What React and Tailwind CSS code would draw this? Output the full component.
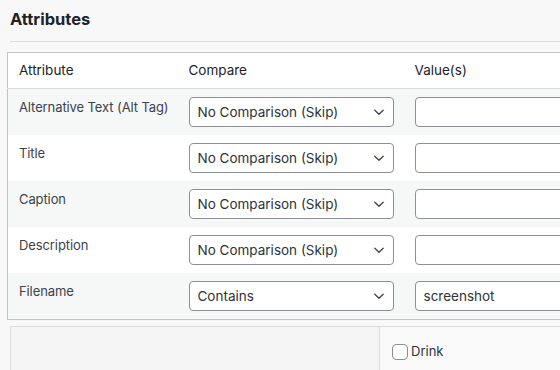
import React from "react";

const Chevron = () => (
  <svg width="12" height="12" viewBox="0 0 12 12" fill="none" className="shrink-0">
    <path d="M1.8 4.2 L6 8.2 L10.2 4.2" stroke="#3c434a" strokeWidth="1.3" strokeLinecap="round" strokeLinejoin="round" />
  </svg>
);

const Select = ({ value }) => (
  <div className="flex h-[30px] w-[205px] items-center justify-between rounded-[4px] border border-[#8c8f94] bg-white pl-[8px] pr-[8px] text-[13.5px] text-[#2c3338]">
    <span>{value}</span>
    <Chevron />
  </div>
);

const Input = ({ value }) => (
  <div className="flex h-[30px] w-[200px] items-center rounded-[4px] border border-[#8c8f94] bg-white px-[8px] text-[13.5px] text-[#2c3338]">
    {value}
  </div>
);

const rows = [
  { label: "Alternative Text (Alt Tag)", cmp: "No Comparison (Skip)", val: "", striped: true },
  { label: "Title", cmp: "No Comparison (Skip)", val: "", striped: false },
  { label: "Caption", cmp: "No Comparison (Skip)", val: "", striped: true },
  { label: "Description", cmp: "No Comparison (Skip)", val: "", striped: false },
  { label: "Filename", cmp: "Contains", val: "screenshot", striped: true },
];

export default function App() {
  return (
    <div
      className="h-[370px] w-[560px] overflow-hidden bg-[#f8f8f8] text-[#1d2327]"
      style={{ fontFamily: "Inter, 'Noto Sans', 'Liberation Sans', sans-serif" }}
    >
      <h2 className="pl-[10px] pt-[8px] text-[16.5px] font-bold leading-[22px] text-[#1d2327]">Attributes</h2>
      <div className="ml-[10px] mt-[11px] border-t border-[#dcdcde]" />
      <table className="ml-[7px] mt-[10px] w-[620px] table-fixed border-collapse border border-[#c3c4c7] bg-white">
        <colgroup>
          <col className="w-[171px]" />
          <col className="w-[226px]" />
          <col />
        </colgroup>
        <thead>
          <tr className="h-[36px] border-b border-[#dcdcde] bg-white text-left text-[13.5px] font-normal text-[#1d2327]">
            <th className="px-[11px] font-normal">Attribute</th>
            <th className="px-[10px] font-normal">Compare</th>
            <th className="px-[10px] font-normal">Value(s)</th>
          </tr>
        </thead>
        <tbody>
          {rows.map((r) => (
            <tr key={r.label} className={r.striped ? "h-[46px] bg-[#f6f7f7]" : "h-[46px] bg-white"}>
              <td className="whitespace-nowrap pl-[11px] pt-[8px] align-top text-[13px] leading-[20px] tracking-[-0.1px] text-[#3c434a]">{r.label}</td>
              <td className="px-[10px] pt-[8px] pb-[8px] align-top">
                <Select value={r.cmp} />
              </td>
              <td className="px-[10px] pt-[8px] pb-[8px] align-top">
                <Input value={r.val} />
              </td>
            </tr>
          ))}
        </tbody>
      </table>
      <div className="ml-[10px] mt-[6px] flex h-[60px] border-l border-t border-[#dcdcde]">
        <div className="w-[368px] bg-[#f5f5f5]" />
        <div className="flex flex-1 items-start border-l border-[#dcdcde] bg-[#fafafa] pl-[12px] pt-[15px]">
          <label className="flex items-center gap-[3px] text-[13px] text-[#2c3338]">
            <span className="inline-block h-[16px] w-[16px] rounded-[4px] border border-[#8c8f94] bg-white" />
            Drink
          </label>
        </div>
      </div>
    </div>
  );
}
